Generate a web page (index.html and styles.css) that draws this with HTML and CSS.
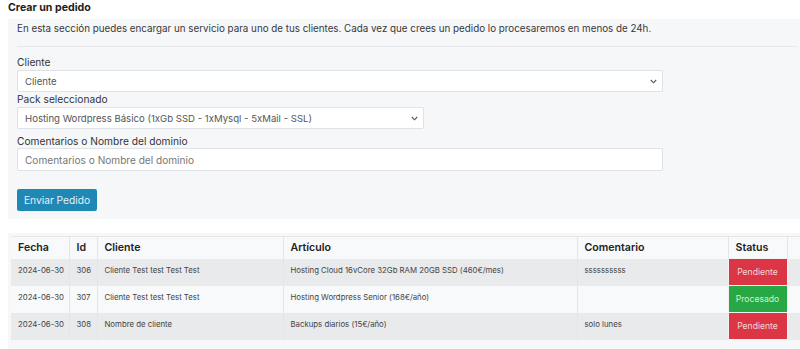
FILE: index.html
```html
<!DOCTYPE html>
<html lang="es">
<head>
<meta charset="utf-8">
<title>Crear un pedido</title>
<link rel="stylesheet" href="styles.css">
</head>
<body>
<h1 class="title">Crear un pedido</h1>
<section class="panel">
  <p class="intro">En esta sección puedes encargar un servicio para uno de tus clientes. Cada vez que crees un pedido lo procesaremos en menos de 24h.</p>
  <hr class="sep">
  <label class="label">Cliente</label>
  <div class="select wide">
    <span>Cliente</span>
    <svg class="chev" width="7" height="5" viewBox="0 0 7 5"><path d="M0.8 1 L3.5 3.8 L6.2 1" fill="none" stroke="#555" stroke-width="1.1"/></svg>
  </div>
  <label class="label">Pack seleccionado</label>
  <div class="select narrow">
    <span>Hosting Wordpress Básico (1xGb SSD - 1xMysql - 5xMail - SSL)</span>
    <svg class="chev" width="7" height="5" viewBox="0 0 7 5"><path d="M0.8 1 L3.5 3.8 L6.2 1" fill="none" stroke="#555" stroke-width="1.1"/></svg>
  </div>
  <label class="label label-gap">Comentarios o Nombre del dominio</label>
  <div class="input wide"><span class="ph">Comentarios o Nombre del dominio</span></div>
  <button class="btn">Enviar Pedido</button>
</section>
<div class="tablewrap">
  <table class="orders">
    <thead>
      <tr><th class="c-fecha">Fecha</th><th class="c-id">Id</th><th class="c-cli">Cliente</th><th class="c-art">Artículo</th><th class="c-com">Comentario</th><th class="c-st">Status</th><th class="c-x"></th></tr>
    </thead>
    <tbody>
      <tr class="odd"><td>2024-06-30</td><td>306</td><td>Cliente Test test Test Test</td><td>Hosting Cloud 16vCore 32Gb RAM 20GB SSD (460€/mes)</td><td>ssssssssss</td><td class="st red">Pendiente</td><td></td></tr>
      <tr class="even"><td>2024-06-30</td><td>307</td><td>Cliente Test test Test Test</td><td>Hosting Wordpress Senior (168€/año)</td><td></td><td class="st green">Procesado</td><td></td></tr>
      <tr class="odd"><td>2024-06-30</td><td>308</td><td>Nombre de cliente</td><td>Backups diarios (15€/año)</td><td>solo lunes</td><td class="st red">Pendiente</td><td></td></tr>
    </tbody>
  </table>
</div>
</body>
</html>
```
FILE: styles.css
```css
html, body { margin: 0; padding: 0; background: #fff; }
body {
  width: 800px;
  height: 349px;
  overflow: hidden;
  font-family: Inter, "Open Sans", sans-serif;
  color: #333;
  padding-left: 8px;
  box-sizing: border-box;
}
.title {
  margin: 0;
  height: 19px;
  font-size: 10.6px;
  font-weight: 700;
  line-height: 16px;
  color: #1e1e1e;
}
.panel {
  width: 798px;
  box-sizing: border-box;
  background: #f6f7f9;
  padding: 3px 9px 9px 9px;
  height: 200px;
}
.intro {
  margin: 0;
  font-size: 9.8px;
  line-height: 14px;
  color: #383838;
}
.sep {
  margin: 10px 0 8px 0;
  border: 0;
  border-top: 1px solid #e6e8eb;
  height: 0;
}
.label {
  display: block;
  font-size: 10.2px;
  line-height: 15px;
  color: #333;
}
.label-gap { margin-top: 5px; line-height: 14px; }
.select, .input {
  box-sizing: border-box;
  background: #fff;
  border: 1px solid #dfe2e6;
  border-radius: 2px;
  display: flex;
  align-items: center;
  justify-content: space-between;
  padding: 0 5px 0 7px;
  color: #555;
}
.select { height: 22px; font-size: 9.6px; }
.input { height: 23px; font-size: 10.1px; }
.wide { width: 646px; }
.narrow { width: 407px; }
.chev { flex: none; }
.ph { color: #777; }
.btn {
  display: block;
  margin-top: 18px;
  width: 80px;
  height: 22px;
  background: #1f88b5;
  border: 0;
  border-radius: 2px;
  color: #e4f1f7;
  font-family: inherit;
  font-size: 10.2px;
  padding: 0;
}
.tablewrap {
  margin-top: 14px;
  width: 800px;
  background: #f6f7f9;
  padding: 3px 0 10px 3px;
  box-sizing: border-box;
}
.orders {
  border-collapse: collapse;
  table-layout: fixed;
  width: 789px;
}
.orders th, .orders td {
  border-left: 1px solid #e3e5e8;
  text-align: left;
  vertical-align: top;
  padding: 0 7px;
  box-sizing: border-box;
  white-space: nowrap;
  overflow: hidden;
}
.orders th:first-child, .orders td:first-child { border-left: 0; }
.orders thead tr { background: #f8f9fa; border-top: 1px solid #e4e6e9; }
.orders th {
  height: 22px;
  font-size: 10.6px;
  font-weight: 600;
  line-height: 21px;
  color: #222;
}
.orders td {
  height: 27px;
  font-size: 7.8px;
  line-height: 12px;
  padding-top: 5px;
  color: #444;
}
.orders tr.odd { background: #e9eaec; }
.orders tr.even { background: #f8f9fa; }
.c-fecha { width: 58px; }
.c-id { width: 28px; }
.c-cli { width: 186px; }
.c-art { width: 294px; }
.c-com { width: 151px; }
.c-st { width: 59px; }
.c-x { width: 13px; }
.orders td.st {
  text-align: center;
  vertical-align: middle;
  padding: 0;
  font-size: 8.6px;
  border: 1px solid #f2f2f2;
}
.st.red { background: #dc3545; color: #f7d5d9; }
.st.green { background: #28a745; color: #d4f0da; }
```
